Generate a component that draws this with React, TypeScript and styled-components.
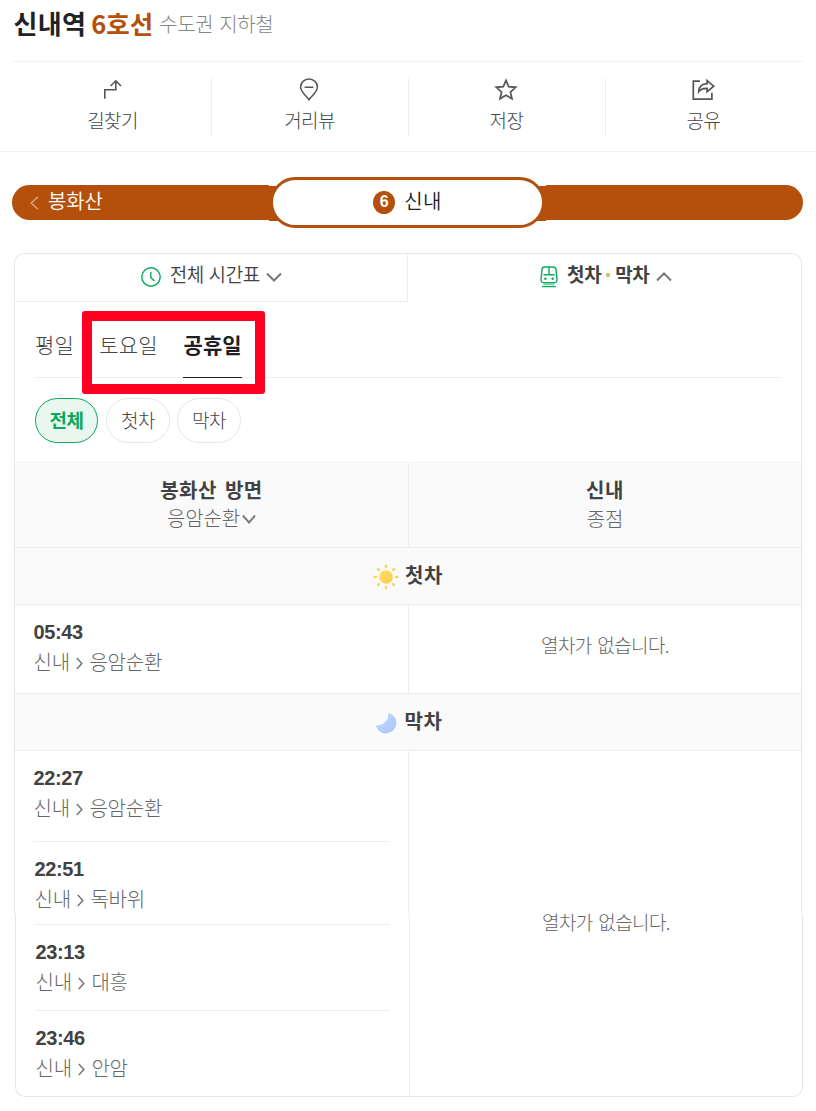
import React from "react";
import styled, { createGlobalStyle, css } from "styled-components";

const ORANGE = "#b4500b";
const GREEN = "#0aa95c";
const LINE = "#eeeeef";
const EDGE = "#e6e7e9";

const GlobalStyle = createGlobalStyle`
  * { box-sizing: border-box; }
  body { margin: 0; background: #fff; }
  button { font: inherit; background: none; border: 0; padding: 0; letter-spacing: inherit; word-spacing: inherit; color: inherit; }
  svg { display: block; flex: none; }
`;

const Page = styled.main`
  width: 816px;
  height: 1111px;
  overflow: hidden;
  color: #424242;
  font-family: "Noto Sans CJK KR", sans-serif;
  font-size: 19px;
  font-weight: 300;
  white-space: nowrap;
`;

const Header = styled.header`
  display: flex;
  align-items: flex-start;
  height: 61px;
  padding: 5px 0 0 13.5px;
`;
const StationName = styled.h1`
  margin: 0;
  font-size: 26px;
  line-height: 36px;
  font-weight: 700;
  letter-spacing: 0.3px;
  color: #222;
`;
const LineName = styled.span`
  margin-left: 5px;
  font-size: 25.5px;
  line-height: 36px;
  font-weight: 700;
  letter-spacing: 0;
  color: ${ORANGE};
`;
const Region = styled.span`
  margin-left: 6px;
  font-size: 20px;
  line-height: 38px;
  letter-spacing: -0.4px;
  word-spacing: 2px;
  color: #858585;
`;

const Actions = styled.nav`
  display: grid;
  grid-template-columns: repeat(4, 197px);
  margin: 0 13px 0 12px;
  padding: 16px 0 0 3px;
  height: 90px;
  border-top: 1px solid #f2f2f3;
`;
const Action = styled.button`
  display: flex;
  flex-direction: column;
  align-items: center;
  height: 58px;
  padding-right: 1px;
  border-right: 1px solid ${LINE};
  letter-spacing: -0.6px;
  line-height: 28px;
  color: #444;
  &:last-child { border-right-color: transparent; }
  svg { margin: -1px 1px 5px 0; }
`;
const Rule = styled.div`
  height: 1px;
  background: #f2f2f3;
`;

const Route = styled.section`
  display: flex;
  align-items: flex-start;
  height: 51px;
  margin: 25px 13px 25px 12px;
  font-size: 20px;
  font-weight: 350;
`;
const Neighbor = styled.button<{ $end?: boolean }>`
  display: flex;
  align-items: center;
  flex: 1;
  height: 35px;
  margin-top: 8px;
  padding: 0 0 4px 18px;
  background: ${ORANGE};
  color: #fff;
  letter-spacing: -0.2px;
  border-radius: ${(p) => (p.$end ? "0 17.5px 17.5px 0" : "17.5px 0 0 17.5px")};
  svg { margin: 4px 9px 0 0; }
`;
const CurrentWrap = styled.div`
  width: 277px;
  height: 51px;
  padding: 0 1px;
  background: linear-gradient(${ORANGE}, ${ORANGE}) 0 9px / 100% 35px no-repeat;
`;
const Current = styled.div`
  display: flex;
  align-items: center;
  justify-content: center;
  height: 51px;
  padding: 0 0 4px 0;
  border: 3px solid ${ORANGE};
  border-radius: 25.5px;
  background: #fff;
  color: #222;
  letter-spacing: 0.3px;
`;
const LineBadge = styled.span`
  display: flex;
  align-items: center;
  justify-content: center;
  width: 22px;
  height: 23px;
  margin: 3px 9px 0 0;
  border-radius: 50%;
  background: ${ORANGE};
  color: #fff;
  letter-spacing: 0;
  font: 700 16px "Liberation Sans", sans-serif;
`;

const Card = styled.section`
  display: flex;
  flex-direction: column;
  width: 788px;
  margin-left: 14px;
`;
const CardTop = styled.div`
  height: 661px;
  border: 1px solid ${EDGE};
  border-bottom: 0;
  border-radius: 10px 10px 0 0;
`;
const CardBottom = styled.div`
  height: 183px;
  margin-left: 1px;
  margin-right: -1px;
  border: 1px solid ${EDGE};
  border-top: 0;
  border-radius: 0 0 10px 10px;
`;
const Modes = styled.div`
  display: grid;
  grid-template-columns: 393px 393px;
  height: 48px;
`;
const Mode = styled.button<{ $active?: boolean }>`
  display: flex;
  align-items: center;
  justify-content: center;
  padding-bottom: 8px;
  font-weight: 350;
  letter-spacing: -0.4px;
  word-spacing: 1px;
  svg { margin-top: 6px; }
  ${(p) =>
    p.$active
      ? css`
          padding-left: 3px;
          padding-bottom: 9px;
          font-weight: 700;
          svg { margin-top: 7px; }
        `
      : css`
          padding-left: 1px;
          border-right: 1px solid ${LINE};
          border-bottom: 1px solid ${LINE};
        `}
`;
const ModeText = styled.span`
  margin: 0 6.5px 0 9px;
`;
const Dot = styled.i`
  display: inline-block;
  width: 4px;
  height: 4px;
  margin: 0 5px 5px 5px;
  border-radius: 1px;
  background: #c9c47c;
`;

const Days = styled.div`
  display: flex;
  position: relative;
  margin: 0 20px;
  height: 76px;
  border-bottom: 1px solid ${LINE};
  font-size: 21px;
  letter-spacing: 0.1px;
`;
const Day = styled.button<{ $active?: boolean }>`
  height: 76px;
  margin-right: 25.5px;
  padding-top: 8px;
  color: #444;
  ${(p) =>
    p.$active &&
    css`
      width: 59px;
      padding-top: 9px;
      font-weight: 700;
      color: #1e1e23;
      border-bottom: 1px solid #1e1e23;
    `}
`;
const Highlight = styled.div`
  position: absolute;
  left: 47px;
  top: 9px;
  width: 183px;
  height: 83px;
  border: 10px solid #ff0022;
  border-radius: 3px;
`;

const Filters = styled.div`
  display: flex;
  gap: 8px;
  height: 84px;
  padding: 20px 0 0 20px;
`;
const Chip = styled.button<{ $active?: boolean }>`
  width: ${(p) => (p.$active ? 63 : 64)}px;
  height: 45px;
  padding-bottom: 3px;
  & + &:last-child { margin-left: -1px; }
  border: 1px solid ${(p) => (p.$active ? GREEN : "#e7e7e7")};
  border-radius: 22.5px;
  letter-spacing: -0.6px;
  color: ${(p) => (p.$active ? GREEN : "#444")};
  background: ${(p) => (p.$active ? "#eaf7f0" : "#fff")};
  font-weight: ${(p) => (p.$active ? 700 : 300)};
`;

const Columns = styled.div<{ $height: number; $shaded?: boolean }>`
  display: grid;
  grid-template-columns: 394px 1fr;
  height: ${(p) => p.$height}px;
  background: ${(p) => (p.$shaded ? "#fafafa" : "transparent")};
  > :first-child { border-right: 1px solid ${LINE}; }
`;
const Direction = styled.div`
  display: flex;
  flex-direction: column;
  align-items: center;
  padding-top: 12px;
  font-size: 20px;
`;
const DirectionName = styled.strong`
  font-weight: 700;
  line-height: 29px;
  letter-spacing: 0.5px;
  word-spacing: 3px;
`;
const DirectionSub = styled.span<{ $terminal?: boolean }>`
  display: flex;
  align-items: center;
  line-height: ${(p) => (p.$terminal ? 30 : 28)}px;
  letter-spacing: -0.2px;
  color: #666;
  svg { margin: 2px 0 0 2px; }
`;
const Band = styled.div`
  display: flex;
  justify-content: center;
  align-items: center;
  height: 58px;
  padding: 0 0 4px;
  background: #fafafa;
  border: solid ${LINE};
  border-width: 1px 0;
  font-size: 20px;
  font-weight: 700;
  letter-spacing: 0.5px;
  svg { margin: 6px 6px 0 0; }
`;
const Empty = styled.div`
  display: flex;
  align-items: center;
  justify-content: center;
  padding-bottom: 9px;
  letter-spacing: -0.6px;
  word-spacing: 2px;
  color: #666;
`;
const Trains = styled.div<{ $inset: number }>`
  padding-left: ${(p) => p.$inset}px;
  padding-right: 19px;
`;
const Train = styled.div<{ $height: number; $last?: boolean; $nudge?: number }>`
  height: ${(p) => p.$height}px;
  padding-top: 12px;
  padding-left: ${(p) => p.$nudge ?? 0}px;
  border-bottom: ${(p) => (p.$last ? 0 : 1)}px solid ${LINE};
`;
const TrainDivider = styled.div`
  height: 11px;
  border-bottom: 1px solid ${LINE};
`;
const Time = styled.div`
  margin-left: 0.5px;
  font: 700 20px/30px "Liberation Sans", sans-serif;
  letter-spacing: -0.4px;
`;
const Path = styled.div`
  display: flex;
  align-items: center;
  margin: -1px 0 0 0.5px;
  font-size: 20px;
  line-height: 31px;
  letter-spacing: -0.2px;
  color: #666;
  svg { margin: 4px 5.5px 0 5px; }
`;

const Chevron = ({ up, color = "#777", w = 16 }: { up?: boolean; color?: string; w?: number }) => (
  <svg width={w} height="10" viewBox="0 0 16 10" fill="none" stroke={color} strokeWidth="2" preserveAspectRatio="none">
    <path d={up ? "M1 8.5 8 1.5 15 8.5" : "M1 1.5 8 8.5 15 1.5"} />
  </svg>
);
const RouteIcon = () => (
  <svg width="24" height="24" viewBox="0 0 24 24" fill="none" stroke="#555" strokeWidth="1.6">
    <path d="M4.800 21.800v-9h11V3.800M10.600 9l5.200-5.200L21 9" />
  </svg>
);
const PinIcon = () => (
  <svg width="24" height="24" viewBox="0 0 24 24" fill="none" stroke="#555" strokeWidth="1.5">
    <path d="M12 22.800C10 19.500 3.600 15.400 3.600 10A8.400 8 0 0 1 20.400 10C20.400 15.400 14 19.500 12 22.800ZM7.600 10.200h8.800" />
  </svg>
);
const StarIcon = () => (
  <svg width="24" height="24" viewBox="0 0 24 24" fill="none" stroke="#555" strokeWidth="1.7">
    <path d="m12 3.400 2.700 6.300 7 .600-5.300 4.700 1.600 6.800L12 18.200l-6 3.600 1.600-6.800-5.300-4.700 7-.600Z" />
  </svg>
);
const ShareIcon = () => (
  <svg width="24" height="24" viewBox="0 0 24 24" fill="none" stroke="#555" strokeWidth="1.7">
    <path d="M9 4.200H2.300v18h18.600v-6.400" />
    <path d="M7.700 14.600c.2-5 3-7.600 8.400-7.900V3.600l6.600 5.600-6.600 5.400v-3.200c-4-.2-6.300.500-8.400 3.200Z" />
  </svg>
);
const ClockIcon = () => (
  <svg width="20" height="20" viewBox="0 0 20 20" fill="none" stroke={GREEN} strokeWidth="1.4">
    <circle cx="10" cy="10" r="9.200" />
    <path d="M9.800 5v5.500l3.600 3.600" />
  </svg>
);
const TrainIcon = () => (
  <svg width="18" height="22" viewBox="0 0 18 22" fill="none" stroke={GREEN} strokeWidth="1.400">
    <path d="M5 1h8q2.700 0 3 2.700l1 9.500q.2 3.600-3 3.600H4q-3.200 0-3-3.600L2 3.700Q2.300 1 5 1ZM9 1v7.600M3.400 8.800h11.200M2.200 20.600h13.600" />
    <path d="M3.500 18.700h11" strokeWidth=".7" />
    <circle cx="5.400" cy="12.800" r="1.200" fill={GREEN} stroke="none" />
    <circle cx="12.600" cy="12.800" r="1.200" fill={GREEN} stroke="none" />
  </svg>
);
const SunIcon = () => (
  <svg width="26" height="26" viewBox="0 0 26 26">
    <defs>
      <linearGradient id="sun" x1="0" y1="0" x2="1" y2="1">
        <stop stopColor="#ffdf6b" />
        <stop offset="1" stopColor="#ffc943" />
      </linearGradient>
    </defs>
    <circle cx="13" cy="13" r="6.800" fill="url(#sun)" />
    {[0, 45, 90, 135, 180, 225, 270, 315].map((a) => (
      <path key={a} d="M13 1.600v1.400" stroke="#ffd054" strokeWidth="2.300" strokeLinecap="round" transform={`rotate(${a} 13 13)`} />
    ))}
  </svg>
);
const MoonIcon = () => (
  <svg width="25" height="22" viewBox="-1 0 25 22">
    <defs>
      <linearGradient id="moon" x1="0" y1="0" x2="1" y2="1">
        <stop stopColor="#b5dcff" />
        <stop offset="1" stopColor="#b3c5ff" />
      </linearGradient>
    </defs>
    <path d="M13.200.7A10.500 10.500 0 1 1 .7 13.400C8 14.200 14.400 8.500 13.200.7Z" fill="url(#moon)" />
  </svg>
);
const Arrow = () => (
  <svg width="9" height="13" viewBox="0 0 9 13" fill="none" stroke="#777" strokeWidth="1.500">
    <path d="m1.800 1 5 5.500-5 5.500" />
  </svg>
);

const TrainRow = ({ time, to, height, last, nudge }: { time: string; to: string; height: number; last?: boolean; nudge?: number }) => (
  <Train $height={height} $last={last} $nudge={nudge}>
    <Time>{time}</Time>
    <Path>
      신내
      <Arrow />
      {to}
    </Path>
  </Train>
);

const LastTrains = styled(Columns)`
  grid-template-rows: 163px;
`;
const LowEmpty = styled(Empty)`
  align-items: flex-start;
  line-height: 16px;
`;

export default function App() {
  return (
    <Page>
      <GlobalStyle />
      <Header>
        <StationName>신내역</StationName>
        <LineName>6호선</LineName>
        <Region>수도권 지하철</Region>
      </Header>
      <Actions>
        <Action><RouteIcon />길찾기</Action>
        <Action><PinIcon />거리뷰</Action>
        <Action><StarIcon />저장</Action>
        <Action><ShareIcon />공유</Action>
      </Actions>
      <Rule />
      <Route>
        <Neighbor>
          <svg width="9" height="14" viewBox="0 0 9 14" fill="none" stroke="#dca57f" strokeWidth="1.500">
            <path d="M8 .8 1.200 7 8 13.200" />
          </svg>
          봉화산
        </Neighbor>
        <CurrentWrap>
          <Current><LineBadge>6</LineBadge>신내</Current>
        </CurrentWrap>
        <Neighbor $end />
      </Route>
      <Card>
        <CardTop>
          <Modes>
            <Mode><ClockIcon /><ModeText>전체 시간표</ModeText><Chevron /></Mode>
            <Mode $active><TrainIcon /><ModeText>첫차<Dot />막차</ModeText><Chevron up /></Mode>
          </Modes>
          <Days>
            <Day>평일</Day>
            <Day>토요일</Day>
            <Day $active>공휴일</Day>
            <Highlight />
          </Days>
          <Filters>
            <Chip $active>전체</Chip>
            <Chip>첫차</Chip>
            <Chip>막차</Chip>
          </Filters>
          <Rule />
          <Columns $height={84} $shaded>
            <Direction>
              <DirectionName>봉화산 방면</DirectionName>
              <DirectionSub>응암순환<Chevron w={14} /></DirectionSub>
            </Direction>
            <Direction>
              <DirectionName>신내</DirectionName>
              <DirectionSub $terminal>종점</DirectionSub>
            </Direction>
          </Columns>
          <Band><SunIcon />첫차</Band>
          <Columns $height={88}>
            <Trains $inset={18}>
              <TrainRow time="05:43" to="응암순환" height={88} last />
            </Trains>
            <Empty>열차가 없습니다.</Empty>
          </Columns>
          <Band><MoonIcon />막차</Band>
          <LastTrains $height={163}>
            <Trains $inset={18}>
              <TrainRow time="22:27" to="응암순환" height={91} />
              <TrainRow time="22:51" to="독바위" height={72} nudge={1} last />
            </Trains>
            <Empty />
          </LastTrains>
        </CardTop>
        <CardBottom>
          <Columns $height={182}>
            <Trains $inset={19}>
              <TrainDivider />
              <TrainRow time="23:13" to="대흥" height={86} />
              <TrainRow time="23:46" to="안암" height={85} last />
            </Trains>
            <LowEmpty>열차가 없습니다.</LowEmpty>
          </Columns>
        </CardBottom>
      </Card>
    </Page>
  );
}
